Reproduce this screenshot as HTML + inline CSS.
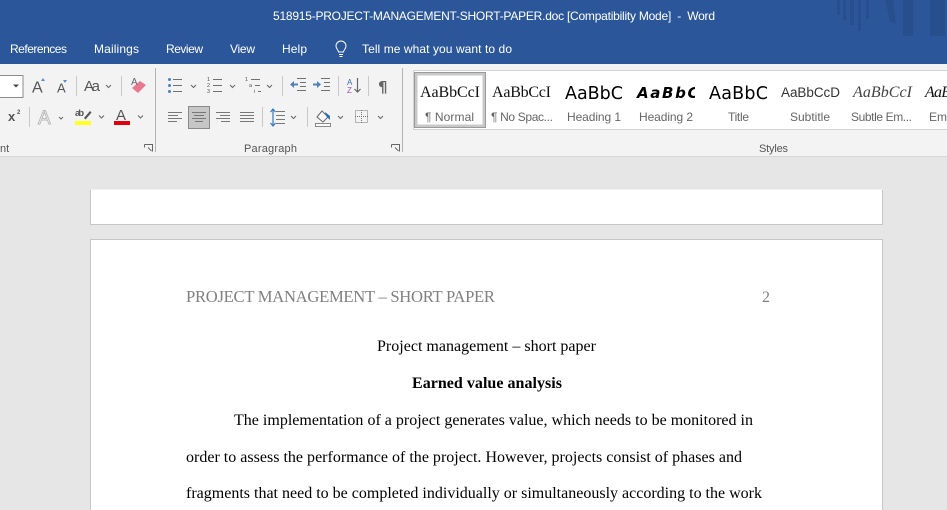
<!DOCTYPE html>
<html><head><meta charset="utf-8"><style>
html,body{margin:0;padding:0;width:947px;height:510px;overflow:hidden;background:#e6e6e6}
svg{display:block}
.s{font-family:"Liberation Sans",sans-serif}
.d{font-family:"DejaVu Sans",sans-serif}
.f{font-family:"Liberation Serif",serif}
</style></head><body>
<svg width="947" height="510" viewBox="0 0 947 510" xmlns="http://www.w3.org/2000/svg">
<rect width="947" height="510" fill="#e6e6e6"/>
<rect width="947" height="64" fill="#2b579a"/>
<g fill="#274f8d">
<rect x="837" y="0" width="3" height="15"/><rect x="843" y="0" width="3" height="20"/><rect x="850" y="0" width="4" height="25"/><rect x="858" y="0" width="3" height="31"/><rect x="866" y="0" width="3" height="19"/>
<path d="M885 0h8l3 24-6-2zM903 0h10v36h-10zM930 0h15v36h-15z"/>
</g>
<g class="s" fill="#fff" font-size="12">
<text x="273" y="20" textLength="442">518915-PROJECT-MANAGEMENT-SHORT-PAPER.doc [Compatibility Mode]&#160; -&#160; Word</text>
<text x="10" y="53" textLength="57">References</text>
<text x="94" y="53" textLength="45">Mailings</text>
<text x="166" y="53" textLength="37">Review</text>
<text x="230" y="53" textLength="25">View</text>
<text x="282" y="53" textLength="25">Help</text>
<text x="362" y="53" textLength="150">Tell me what you want to do</text>
</g>
<path d="M339 54.500h4M339.500 56.500h3M338.500 52c0-2-2.500-3-2.500-6a5 5 0 0 1 10 0c0 3-2.500 4-2.500 6z" fill="none" stroke="#fff" stroke-width="1"/>

<rect y="64" width="947" height="92" fill="#f3f3f3"/>
<rect y="156" width="947" height="1" fill="#d6d6d6"/>

<!-- separators -->
<g fill="#c8c8c8">
<rect x="76" y="76" width="1" height="20"/><rect x="121" y="76" width="1" height="20"/><rect x="29" y="107" width="1" height="20"/>
<rect x="282" y="76" width="1" height="20"/><rect x="338" y="76" width="1" height="20"/><rect x="368" y="76" width="1" height="20"/>
<rect x="262" y="107" width="1" height="20"/><rect x="307" y="107" width="1" height="20"/>
</g>
<g fill="#b4b4b4"><rect x="155" y="68" width="1" height="84"/><rect x="402" y="68" width="1" height="84"/></g>

<!-- font group -->
<rect x="-2" y="75.500" width="25" height="22" fill="#fff" stroke="#8c8c8c"/>
<path d="M13 84.500h6l-3 3z" fill="#444"/>
<g class="s" fill="#555">
<text x="32" y="92.500" font-size="16" textLength="11">A</text>
<text x="57" y="92.500" font-size="13" textLength="10">A</text>
<text x="84" y="91" font-size="15" textLength="16">Aa</text>
<text x="8" y="121" font-size="13" font-weight="bold" textLength="9">x</text>
<text x="17" y="114" font-size="6" font-weight="bold">2</text>
<text x="75" y="116" font-size="9.500" font-weight="bold" textLength="9">ab</text>
<text x="116" y="120" font-size="15" textLength="11">A</text>
<text x="0" y="152" font-size="11">nt</text>
<text x="244" y="152" font-size="11" textLength="53">Paragraph</text>
<text x="759" y="152" font-size="11" textLength="29">Styles</text>
</g>
<path d="M41 81l2-3 2 3zM63 80l2 3 2-3z" fill="#5a8fc4"/>
<g class="s"><text x="38" y="124" font-size="19" fill="#f3f3f3" stroke="#b8b8b8" stroke-width=".9" textLength="13">A</text></g>
<path d="M132 88l8-7 6 4-8 8z" fill="#e8788f"/>
<text class="s" x="131" y="85" font-size="10" fill="#666">A</text>
<path d="M84 118l6-7 1.500 1.500-6 7z" fill="#555"/>
<rect x="75" y="121" width="16" height="4" fill="#ffff20"/>
<rect x="114" y="121" width="16" height="4" fill="#e00010"/>
<!-- carets -->
<path d="M106 85l2.500 2.500 2.500-2.500M59 117l2 2 2-2M99 115.500l2.500 2.500 2.500-2.500M138 115.500l2.500 2.500 2.500-2.500M191 85l2.500 2.500 2.500-2.500M230 85l2.500 2.500 2.500-2.500M267 85l2.500 2.500 2.500-2.500M291 116l2.500 2.500 2.500-2.500M338 116l2.500 2.500 2.500-2.500M378 116l2.500 2.500 2.500-2.500" fill="none" stroke="#666" stroke-width="1"/>
<path d="M144.500 144.500h8v7M144.500 144.500v3M148 147.500l3.500 3.500M391.500 144.500h8v7M391.500 144.500v3M395 147.500l3.500 3.500" fill="none" stroke="#666" stroke-width="1"/>

<!-- lists -->
<path d="M173 79.500h9M173 85.500h9M173 91.500h9M213 79.500h9M213 85.500h9M213 91.500h9M251 79.500h9M255 85.500h5M258 91.500h3M297 78.500h9M300 82.500h6M300 86.500h6M297 90.500h9M321 78.500h9M324 82.500h6M324 86.500h6M321 90.500h9" stroke="#707070" stroke-width="1" fill="none"/>
<g fill="#4f81bd"><circle cx="169.500" cy="79.500" r="1.500"/><circle cx="169.500" cy="85.500" r="1.500"/><circle cx="169.500" cy="91.500" r="1.500"/>
<path d="M290 84.500l4-3.500v2.500h4v2h-4v2.500zM321 84.500l-4-3.500v2.500h-4v2h4v2.500z"/></g>
<g class="s" font-size="5.500" fill="#555"><text x="207" y="81">1</text><text x="207" y="87">2</text><text x="207" y="93">3</text><text x="245" y="81">1</text><text x="249" y="87">a</text><text x="254" y="93">i</text></g>
<text class="s" x="347" y="85" font-size="8" fill="#2f6db5">A</text>
<text class="s" x="347" y="93" font-size="8" fill="#a04fc0">Z</text>
<path d="M357.500 78v14M354.500 89l3 3 3-3" fill="none" stroke="#666" stroke-width="1.200"/>
<text class="d" x="378" y="92" font-size="15" font-weight="bold" fill="#666" textLength="12">¶</text>

<!-- align -->
<rect x="188.500" y="106.500" width="21" height="22" fill="#c6c6c6" stroke="#8a8a8a"/>
<path d="M168 112.500h14M168 115.500h10M168 118.500h14M168 121.500h9M192 112.500h14M194 115.500h10M192 118.500h14M195 121.500h8M216 112.500h14M220 115.500h10M216 118.500h14M221 121.500h9M240 112.500h14M240 115.500h14M240 118.500h14M240 121.500h14M276 111.500h9M276 115.500h9M276 119.500h9M276 123.500h9" stroke="#777" stroke-width="1" fill="none"/>
<path d="M273 110v15M270.500 112l2.500-3 2.500 3M270.500 123l2.500 3 2.500-3" fill="none" stroke="#3a78b8" stroke-width="1.200"/>
<path d="M317 117l5-6 6 6-5 5z" fill="#fff" stroke="#666"/><path d="M325 112l5 4v4l-4-4z" fill="#2f6db5"/><path d="M315.500 123.500h15v3h-15z" fill="#fff" stroke="#888"/>
<rect x="355.500" y="110.500" width="12" height="12" fill="none" stroke="#777" stroke-dasharray="1 1"/><path d="M361.500 110v13M355 116.500h13" stroke="#777" stroke-dasharray="1 1"/>

<!-- styles -->
<rect x="413.500" y="70.500" width="540" height="59" fill="#fff" stroke="#d2d2d2"/>
<rect x="416" y="74" width="68" height="52" fill="#fff" stroke="#c8c8c8" stroke-width="3"/>
<rect x="414.500" y="72.500" width="71" height="55" fill="none" stroke="#9a9a9a"/>
<g fill="#111">
<text class="f" x="420" y="97" font-size="16" textLength="60">AaBbCcI</text>
<text class="f" x="492" y="97" font-size="16" textLength="59">AaBbCcI</text>
<text class="d" x="565" y="99" font-size="17.500" textLength="58" fill="#000">AaBbC</text>
<svg x="630" y="70" width="65" height="50"><text class="d" x="7" y="28" font-size="15" font-weight="bold" font-style="italic" fill="#000" textLength="72">AaBbCc</text></svg>
<text class="d" x="709" y="99" font-size="17.500" textLength="59" fill="#000">AaBbC</text>
<text class="s" x="781" y="97" font-size="13.500" textLength="59" fill="#333">AaBbCcD</text>
<text class="f" x="853" y="97" font-size="16" font-style="italic" textLength="59" fill="#444">AaBbCcI</text>
<text class="f" x="925" y="97" font-size="16" font-style="italic" textLength="26">AaB</text>
</g>
<g class="s" font-size="12" fill="#666">
<text x="425" y="121" textLength="49">¶ Normal</text>
<text x="491" y="121" textLength="62">¶ No Spac...</text>
<text x="567" y="121" textLength="54">Heading 1</text>
<text x="639" y="121" textLength="54">Heading 2</text>
<text x="728" y="121" textLength="21">Title</text>
<text x="790" y="121" textLength="40">Subtitle</text>
<text x="851" y="121" textLength="61">Subtle Em...</text>
<text x="929" y="121" textLength="18">Em</text>
</g>

<!-- pages -->
<rect x="90.500" y="189.500" width="792" height="35" fill="#fff" stroke="none"/>
<path d="M90.500 190v34.500h792V190" fill="none" stroke="#c6c6c6"/>
<rect x="90.500" y="239.500" width="792" height="280" fill="#fff" stroke="#c6c6c6"/>
<g class="f" font-size="16">
<text x="186" y="302" fill="#808080" font-size="16.600" textLength="309">PROJECT MANAGEMENT – SHORT PAPER</text>
<text x="762" y="302" fill="#808080" textLength="8">2</text>
<g fill="#000">
<text x="377" y="351" textLength="219">Project management – short paper</text>
<text x="412" y="388" font-weight="bold" textLength="150">Earned value analysis</text>
<text x="234" y="425" textLength="519">The implementation of a project generates value, which needs to be monitored in</text>
<text x="186" y="462" textLength="556">order to assess the performance of the project. However, projects consist of phases and</text>
<text x="186" y="498" textLength="576">fragments that need to be completed individually or simultaneously according to the work</text>
</g></g>
</svg>
</body></html>
